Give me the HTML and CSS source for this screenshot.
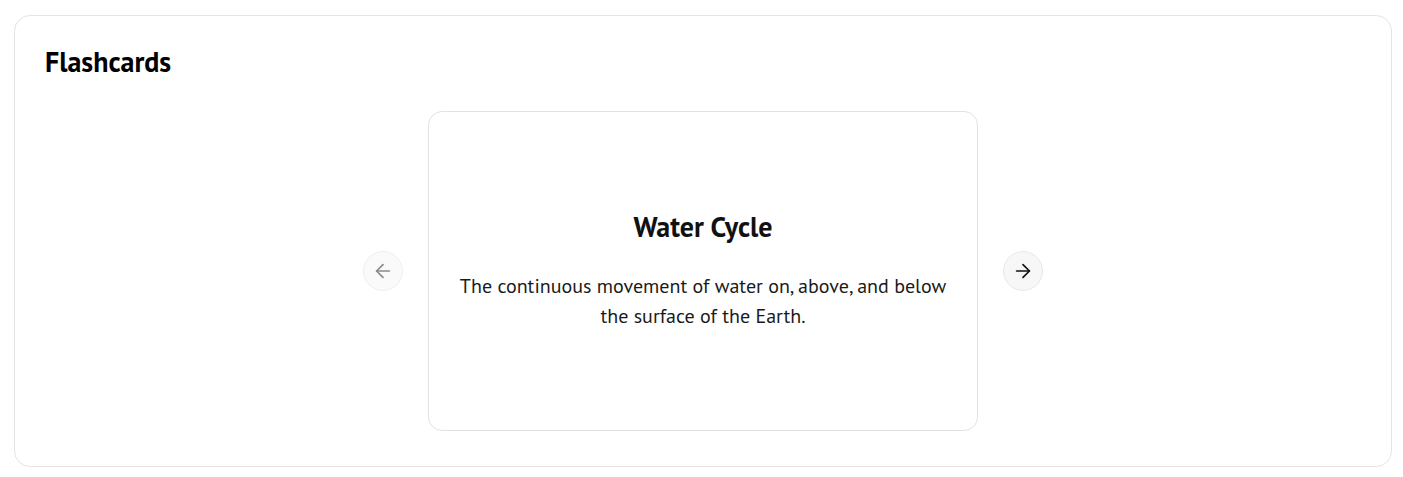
FILE: index.html
```html
<!DOCTYPE html>
<html lang="en">
<head>
<meta charset="utf-8">
<title>Flashcards</title>
<link rel="stylesheet" href="styles.css">
</head>
<body>
<section class="panel">
  <h2 class="panel-title">Flashcards</h2>
  <div class="carousel">
    <button class="nav-btn disabled" aria-label="Previous">
      <svg width="22" height="22" viewBox="0 0 24 24" fill="none" stroke="currentColor" stroke-width="1.8" stroke-linecap="round" stroke-linejoin="round"><path d="M19 12H5"/><path d="M12 19l-7-7 7-7"/></svg>
    </button>
    <div class="card">
      <h3 class="card-title">Water Cycle</h3>
      <p class="card-text">The continuous movement of water on, above, and below the surface of the Earth.</p>
    </div>
    <button class="nav-btn" aria-label="Next">
      <svg width="22" height="22" viewBox="0 0 24 24" fill="none" stroke="currentColor" stroke-width="1.8" stroke-linecap="round" stroke-linejoin="round"><path d="M5 12h14"/><path d="M12 5l7 7-7 7"/></svg>
    </button>
  </div>
</section>
</body>
</html>
```

FILE: styles.css
```css
* { box-sizing: border-box; }
body {
  margin: 0;
  padding: 15px 11px 10px 14px;
  background: #ffffff;
  font-family: "PT Sans", Lato, "Noto Sans", sans-serif;
  color: #111;
}
.panel {
  border: 1px solid #e4e4e4;
  border-radius: 16px;
  padding: 30px 30px 35px 30px;
  height: 452px;
  background: #fff;
}
.panel-title {
  margin: 0;
  font-size: 28px;
  line-height: 32px;
  font-weight: 700;
  color: #000;
}
.carousel {
  margin-top: 33px;
  display: flex;
  align-items: center;
  justify-content: center;
  gap: 25px;
}
.nav-btn {
  width: 40px;
  height: 40px;
  border-radius: 50%;
  border: 1px solid #e8e8e8;
  background: #f7f7f7;
  display: flex;
  align-items: center;
  justify-content: center;
  color: #111;
  padding: 0;
}
.nav-btn.disabled { color: #8a8a8a; background: #fafafa; border-color: #efefef; }
.card {
  width: 550px;
  height: 320px;
  border: 1px solid #e2e2e2;
  border-radius: 14px;
  display: flex;
  flex-direction: column;
  align-items: center;
  justify-content: center;
  text-align: center;
  padding: 0 28px;
}
.card-title {
  margin: 0 0 28px;
  font-size: 28px;
  line-height: 32px;
  font-weight: 700;
  color: #111;
}
.card-text {
  margin: 0;
  font-size: 20px;
  line-height: 30px;
  color: #1a1a1a;
}
```
